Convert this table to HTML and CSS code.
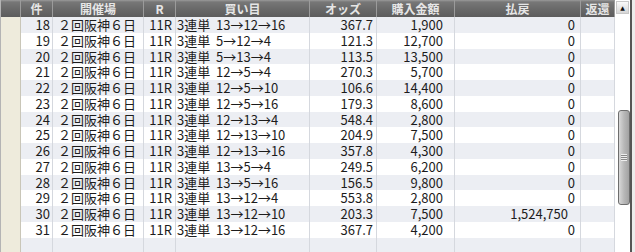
FILE: index.html
```html
<!DOCTYPE html>
<html lang="ja">
<head>
<meta charset="utf-8">
<link rel="stylesheet" href="styles.css">
</head>
<body>
<div class="frame">
  <div class="tbl">
    <div class="row head">
      <div class="c mark"></div>
      <div class="c">件</div>
      <div class="c">開催場</div>
      <div class="c">R</div>
      <div class="c">買い目</div>
      <div class="c">オッズ</div>
      <div class="c">購入金額</div>
      <div class="c">払戻</div>
      <div class="c">返還</div>
    </div>
    <div class="row alt"><div class="c mark"></div><div class="c no">18</div><div class="c place">２回阪神６日</div><div class="c race">11R</div><div class="c bet">3連単&nbsp;&nbsp;13→12→16</div><div class="c odds">367.7</div><div class="c amt">1,900</div><div class="c pay">0</div><div class="c"></div></div>
    <div class="row"><div class="c mark"></div><div class="c no">19</div><div class="c place">２回阪神６日</div><div class="c race">11R</div><div class="c bet">3連単&nbsp;&nbsp;5→12→4</div><div class="c odds">121.3</div><div class="c amt">12,700</div><div class="c pay">0</div><div class="c"></div></div>
    <div class="row alt"><div class="c mark"></div><div class="c no">20</div><div class="c place">２回阪神６日</div><div class="c race">11R</div><div class="c bet">3連単&nbsp;&nbsp;5→13→4</div><div class="c odds">113.5</div><div class="c amt">13,500</div><div class="c pay">0</div><div class="c"></div></div>
    <div class="row"><div class="c mark"></div><div class="c no">21</div><div class="c place">２回阪神６日</div><div class="c race">11R</div><div class="c bet">3連単&nbsp;&nbsp;12→5→4</div><div class="c odds">270.3</div><div class="c amt">5,700</div><div class="c pay">0</div><div class="c"></div></div>
    <div class="row alt"><div class="c mark"></div><div class="c no">22</div><div class="c place">２回阪神６日</div><div class="c race">11R</div><div class="c bet">3連単&nbsp;&nbsp;12→5→10</div><div class="c odds">106.6</div><div class="c amt">14,400</div><div class="c pay">0</div><div class="c"></div></div>
    <div class="row"><div class="c mark"></div><div class="c no">23</div><div class="c place">２回阪神６日</div><div class="c race">11R</div><div class="c bet">3連単&nbsp;&nbsp;12→5→16</div><div class="c odds">179.3</div><div class="c amt">8,600</div><div class="c pay">0</div><div class="c"></div></div>
    <div class="row alt"><div class="c mark"></div><div class="c no">24</div><div class="c place">２回阪神６日</div><div class="c race">11R</div><div class="c bet">3連単&nbsp;&nbsp;12→13→4</div><div class="c odds">548.4</div><div class="c amt">2,800</div><div class="c pay">0</div><div class="c"></div></div>
    <div class="row"><div class="c mark"></div><div class="c no">25</div><div class="c place">２回阪神６日</div><div class="c race">11R</div><div class="c bet">3連単&nbsp;&nbsp;12→13→10</div><div class="c odds">204.9</div><div class="c amt">7,500</div><div class="c pay">0</div><div class="c"></div></div>
    <div class="row alt"><div class="c mark"></div><div class="c no">26</div><div class="c place">２回阪神６日</div><div class="c race">11R</div><div class="c bet">3連単&nbsp;&nbsp;12→13→16</div><div class="c odds">357.8</div><div class="c amt">4,300</div><div class="c pay">0</div><div class="c"></div></div>
    <div class="row"><div class="c mark"></div><div class="c no">27</div><div class="c place">２回阪神６日</div><div class="c race">11R</div><div class="c bet">3連単&nbsp;&nbsp;13→5→4</div><div class="c odds">249.5</div><div class="c amt">6,200</div><div class="c pay">0</div><div class="c"></div></div>
    <div class="row alt"><div class="c mark"></div><div class="c no">28</div><div class="c place">２回阪神６日</div><div class="c race">11R</div><div class="c bet">3連単&nbsp;&nbsp;13→5→16</div><div class="c odds">156.5</div><div class="c amt">9,800</div><div class="c pay">0</div><div class="c"></div></div>
    <div class="row"><div class="c mark"></div><div class="c no">29</div><div class="c place">２回阪神６日</div><div class="c race">11R</div><div class="c bet">3連単&nbsp;&nbsp;13→12→4</div><div class="c odds">553.8</div><div class="c amt">2,800</div><div class="c pay">0</div><div class="c"></div></div>
    <div class="row alt"><div class="c mark"></div><div class="c no">30</div><div class="c place">２回阪神６日</div><div class="c race">11R</div><div class="c bet">3連単&nbsp;&nbsp;13→12→10</div><div class="c odds">203.3</div><div class="c amt">7,500</div><div class="c pay big">1,524,750</div><div class="c"></div></div>
    <div class="row"><div class="c mark"></div><div class="c no">31</div><div class="c place">２回阪神６日</div><div class="c race">11R</div><div class="c bet">3連単&nbsp;&nbsp;13→12→16</div><div class="c odds">367.7</div><div class="c amt">4,200</div><div class="c pay">0</div><div class="c"></div></div>
    <div class="row alt fill"><div class="c mark"></div><div class="c"></div><div class="c"></div><div class="c"></div><div class="c"></div><div class="c"></div><div class="c"></div><div class="c"></div><div class="c"></div></div>
  </div>
  <div class="sb">
    <div class="sb-up">▲</div>
    <div class="sb-thumb"><span class="grip"></span></div>
  </div>
</div>
</body>
</html>
```
FILE: styles.css
```css
html, body {
  margin: 0;
  padding: 0;
  background: #ececec;
}
.frame {
  display: flex;
  width: 635px;
  height: 252px;
  overflow: hidden;
}
.tbl {
  width: 615px;
  height: 252px;
  display: flex;
  flex-direction: column;
  border-left: 1px solid #b4b4b4;
  box-sizing: border-box;
  background: #fff;
}
.row {
  display: grid;
  grid-template-columns: 20px 32px 91px 32px 134px 67px 78px 126px 34px;
  height: 15.77px;
  flex: none;
  font-family: "Noto Sans CJK JP", sans-serif;
  font-size: 13px;
  line-height: 15.77px;
  color: #1c1c1c;
  background: #fff;
}
.row.alt { background: #eceef3; }
.row.fill { flex: 1; height: auto; }
.c {
  box-sizing: border-box;
  border-right: 1px solid #d5d8de;
  white-space: nowrap;
  padding-top: 1px;
  line-height: 14.77px;
}
.c.mark {
  background: #eeebdc;
  border-right-color: #c9c6b8;
}
.no { text-align: right; padding-right: 2px; }
.place { padding-left: 5px; }
.race { text-align: right; padding-right: 3px; }
.bet { padding-left: 1px; }
.odds { text-align: right; padding-right: 3px; }
.amt { text-align: right; padding-right: 11px; }
.pay { text-align: right; padding-right: 5px; }
.pay.big { padding-right: 12px; }

.row.head {
  height: 17px;
  background: linear-gradient(#9a9a9a 0, #777 2px, #6a6a6a 50%, #5c5c5c 100%);
  font-weight: bold;
  font-size: 12px;
  color: #e6e6e6;
}
.row.head .c {
  padding-top: 0;
  line-height: 17px;
  text-align: center;
  border-right-color: #9b9b9b;
}
.row.head .c.mark { background: transparent; }

.sb {
  width: 17px;
  height: 252px;
  background: #fff;
  border-right: 2px solid #555;
  box-sizing: border-box;
  display: flex;
  flex-direction: column;
  align-items: center;
}
.sb-up {
  width: 13px;
  height: 13px;
  margin-top: 1px;
  box-sizing: border-box;
  border: 1px solid #c8c8c8;
  background: linear-gradient(#fafafa, #d6d6d6);
  font-size: 6px;
  line-height: 11px;
  text-align: center;
  color: #111;
  font-family: "DejaVu Sans", sans-serif;
}
.sb-thumb {
  margin-top: 96px;
  margin-left: 2px;
  width: 12px;
  height: 95px;
  box-sizing: border-box;
  border: 1px solid #6e6e6e;
  border-radius: 3px;
  background: linear-gradient(90deg, #d8d8d8, #b8b8b8 50%, #a2a2a2);
  display: flex;
  align-items: center;
  justify-content: center;
}
.grip {
  width: 6px;
  height: 7px;
  background: repeating-linear-gradient(#eee 0, #eee 1px, #888 1px, #888 2px);
}
```
